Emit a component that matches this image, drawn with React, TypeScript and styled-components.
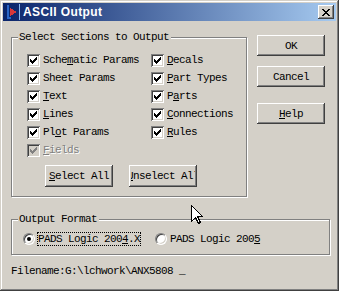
import React from "react";
import styled, { createGlobalStyle } from "styled-components";

const FACE = "#d4d0c8";

const Global = createGlobalStyle`
  html, body { margin: 0; padding: 0; background: ${FACE}; }
  body { font-family: "Liberation Mono", "DejaVu Sans Mono", monospace; }
`;

const monoText = `
  font-family: "Liberation Mono", "DejaVu Sans Mono", monospace;
  font-size: 11px;
  letter-spacing: -0.6px;
  line-height: 13px;
  color: #000;
`;

const raised = `
  box-shadow: inset -1px -1px #404040, inset 1px 1px #ffffff,
    inset -2px -2px #808080, inset 2px 2px ${FACE};
`;

const Window = styled.div`
  position: relative;
  width: 339px;
  height: 291px;
  box-sizing: border-box;
  padding: 3px;
  background: ${FACE};
  box-shadow: inset -1px -1px #404040, inset 1px 1px ${FACE},
    inset -2px -2px #808080, inset 2px 2px #ffffff;
  display: flex;
  flex-direction: column;
  overflow: hidden;
`;

const TitleBar = styled.div`
  height: 18px;
  flex: none;
  display: flex;
  align-items: center;
  padding: 0 2px 0 2px;
  background: linear-gradient(to right, #0a246a, #a6caf0);
`;

const Title = styled.span`
  flex: 1;
  margin-left: 2px;
  font-family: "Liberation Sans", Arial, sans-serif;
  font-weight: bold;
  font-size: 12px;
  letter-spacing: 0.4px;
  line-height: 14px;
  color: #ffffff;
`;

const CloseButton = styled.button`
  width: 16px;
  height: 14px;
  padding: 0;
  border: 0;
  background: ${FACE};
  ${raised}
  display: flex;
  align-items: center;
  justify-content: center;
  outline: none;
`;

const Body = styled.div`
  display: flex;
  flex-direction: column;
  padding-left: 8px;
`;

const TopRow = styled.div`
  display: flex;
  align-items: flex-start;
`;

const Group = styled.div<{ $w: number; $h: number; $mt: number; $pad: string }>`
  position: relative;
  box-sizing: border-box;
  width: ${(p) => p.$w}px;
  height: ${(p) => p.$h}px;
  margin-top: ${(p) => p.$mt}px;
  padding: ${(p) => p.$pad};
  border: 1px solid #808080;
  box-shadow: inset 1px 1px #ffffff, 1px 1px #ffffff;
  flex: none;
`;

const Legend = styled.span`
  position: absolute;
  top: -7px;
  left: 6px;
  padding: 0 2px 0 1px;
  background: ${FACE};
  ${monoText}
`;

const CheckGrid = styled.div`
  display: grid;
  grid-template-columns: 124px 1fr;
  grid-auto-rows: 18px;
`;

const CheckItem = styled.label`
  display: flex;
  align-items: flex-start;
  gap: 3px;
`;

const CheckBox = styled.span<{ $disabled?: boolean }>`
  width: 13px;
  height: 13px;
  box-sizing: border-box;
  flex: none;
  padding: 3px 0 0 3px;
  display: flex;
  background: ${(p) => (p.$disabled ? FACE : "#ffffff")};
  box-shadow: inset 1px 1px #808080, inset -1px -1px #ffffff,
    inset 2px 2px #404040, inset -2px -2px ${FACE};
`;

const CheckText = styled.span<{ $disabled?: boolean }>`
  ${monoText}
  white-space: nowrap;
  color: ${(p) => (p.$disabled ? "#808080" : "#000")};
  text-shadow: ${(p) => (p.$disabled ? "1px 1px #ffffff" : "none")};
`;

const Key = styled.u`
  text-decoration: underline;
  text-underline-offset: 1px;
`;

const ButtonRow = styled.div`
  display: flex;
  gap: 16px;
  margin: 3px 0 0 18px;
`;

const PushButton = styled.button<{ $w: number; $h: number; $mt?: number }>`
  width: ${(p) => p.$w}px;
  height: ${(p) => p.$h}px;
  margin-top: ${(p) => p.$mt ?? 0}px;
  box-sizing: border-box;
  padding: 2px;
  border: 0;
  background: ${FACE};
  ${raised}
  display: flex;
  outline: none;
  flex: none;
  ${monoText}
`;

const Face = styled.span`
  flex: 1;
  display: flex;
  align-items: center;
  justify-content: center;
  overflow: hidden;
  white-space: nowrap;
  padding-top: 1px;
`;

const ButtonColumn = styled.div`
  display: flex;
  flex-direction: column;
  margin: 14px 0 0 10px;
`;

const RadioRow = styled.div`
  display: flex;
  align-items: center;
  height: 14px;
  gap: 14px;
`;

const RadioOption = styled.label`
  display: flex;
  align-items: center;
  gap: 2px;
`;

const Radio = styled.span`
  width: 12px;
  height: 12px;
  box-sizing: border-box;
  border-radius: 50%;
  border: 1px solid;
  border-color: #808080 #ffffff #ffffff #808080;
  background: #ffffff;
  box-shadow: inset 1px 1px #404040, inset -1px -1px ${FACE};
  display: flex;
  align-items: center;
  justify-content: center;
  flex: none;
`;

const Dot = styled.span`
  width: 4px;
  height: 4px;
  border-radius: 50%;
  background: #000;
`;

const RadioText = styled.span<{ $focus?: boolean }>`
  ${monoText}
  line-height: 12px;
  white-space: nowrap;
  border: 1px dotted ${(p) => (p.$focus ? "#000" : "transparent")};
`;

const FileLine = styled.div`
  ${monoText}
  margin-top: 10px;
  white-space: pre;
`;

const Pointer = styled.svg`
  position: absolute;
  left: 191px;
  top: 205px;
`;

const CheckMark = ({ disabled }: { disabled?: boolean }) => (
  <svg width="7" height="7" viewBox="0 0 7 7" shapeRendering="crispEdges">
    <path
      fill={disabled ? "#808080" : "#000"}
      d="M6 0h1v1h-1z M5 1h2v1h-2z M0 2h1v1h-1z M4 2h3v1h-3z M0 3h2v1h-2z M3 3h3v1h-3z M0 4h5v1h-5z M1 5h3v1h-3z M2 6h1v1h-1z"
    />
  </svg>
);

const CloseGlyph = () => (
  <svg width="8" height="7" viewBox="0 0 8 7" shapeRendering="crispEdges">
    <path
      fill="#000"
      d="M0 0h2v1h-2z M6 0h2v1h-2z M1 1h2v1h-2z M5 1h2v1h-2z M2 2h4v1h-4z M3 3h2v1h-2z M2 4h4v1h-4z M1 5h2v1h-2z M5 5h2v1h-2z M0 6h2v1h-2z M6 6h2v1h-2z"
    />
  </svg>
);

const AppIcon = () => (
  <svg width="16" height="16" viewBox="0 0 16 16" shapeRendering="crispEdges">
    <rect x="2" y="1" width="2" height="14" fill="#2a66c8" />
    <rect x="2" y="13" width="4" height="2" fill="#2a66c8" />
    <path d="M5 4 L12 8 L5 12 Z" fill="#d8383a" />
    <rect x="14" y="0" width="1" height="16" fill="#8ab8f0" />
  </svg>
);

type Item = { label: React.ReactNode; disabled?: boolean };

const items: Item[] = [
  { label: <>Sche<Key>m</Key>atic Params</> },
  { label: <><Key>D</Key>ecals</> },
  { label: <>Sheet Params</> },
  { label: <><Key>P</Key>art Types</> },
  { label: <><Key>T</Key>ext</> },
  { label: <>P<Key>a</Key>rts</> },
  { label: <><Key>L</Key>ines</> },
  { label: <><Key>C</Key>onnections</> },
  { label: <>Pl<Key>o</Key>t Params</> },
  { label: <><Key>R</Key>ules</> },
  { label: <><Key>F</Key>ields</>, disabled: true },
];

export default function App() {
  return (
    <>
      <Global />
      <Window>
        <TitleBar>
          <AppIcon />
          <Title>ASCII Output</Title>
          <CloseButton aria-label="Close">
            <CloseGlyph />
          </CloseButton>
        </TitleBar>
        <Body>
          <TopRow>
            <Group $w={236} $h={160} $mt={16} $pad="16px 0 0 15px">
              <Legend>Select Sections to Output</Legend>
              <CheckGrid>
                {items.map((it, i) => (
                  <CheckItem key={i}>
                    <CheckBox $disabled={it.disabled}>
                      <CheckMark disabled={it.disabled} />
                    </CheckBox>
                    <CheckText $disabled={it.disabled}>{it.label}</CheckText>
                  </CheckItem>
                ))}
              </CheckGrid>
              <ButtonRow>
                <PushButton $w={68} $h={22}>
                  <Face>
                    <Key>S</Key>elect All
                  </Face>
                </PushButton>
                <PushButton $w={68} $h={22}>
                  <Face>
                    <Key>U</Key>nselect All
                  </Face>
                </PushButton>
              </ButtonRow>
            </Group>
            <ButtonColumn>
              <PushButton $w={68} $h={21}>
                <Face>OK</Face>
              </PushButton>
              <PushButton $w={68} $h={21} $mt={10}>
                <Face>Cancel</Face>
              </PushButton>
              <PushButton $w={68} $h={21} $mt={16}>
                <Face>
                  <Key>H</Key>elp
                </Face>
              </PushButton>
            </ButtonColumn>
          </TopRow>
          <Group $w={319} $h={36} $mt={22} $pad="12px 0 0 11px">
            <Legend>Output Format</Legend>
            <RadioRow>
              <RadioOption>
                <Radio>
                  <Dot />
                </Radio>
                <RadioText $focus>
                  PADS Logic 200<Key>4</Key>.X
                </RadioText>
              </RadioOption>
              <RadioOption>
                <Radio />
                <RadioText>
                  PADS Logic 200<Key>5</Key>
                </RadioText>
              </RadioOption>
            </RadioRow>
          </Group>
          <FileLine>{"Filename:G:\\lchwork\\ANX5808 _"}</FileLine>
        </Body>
        <Pointer width="13" height="20" viewBox="0 0 13 20" shapeRendering="crispEdges">
          <path
            d="M0.5 0.5 L0.5 16.5 L4.5 12.5 L7.5 18.5 L9.5 17.5 L6.5 11.5 L11.5 11.5 Z"
            fill="#ffffff"
            stroke="#000000"
            strokeWidth="1"
          />
        </Pointer>
      </Window>
    </>
  );
}
